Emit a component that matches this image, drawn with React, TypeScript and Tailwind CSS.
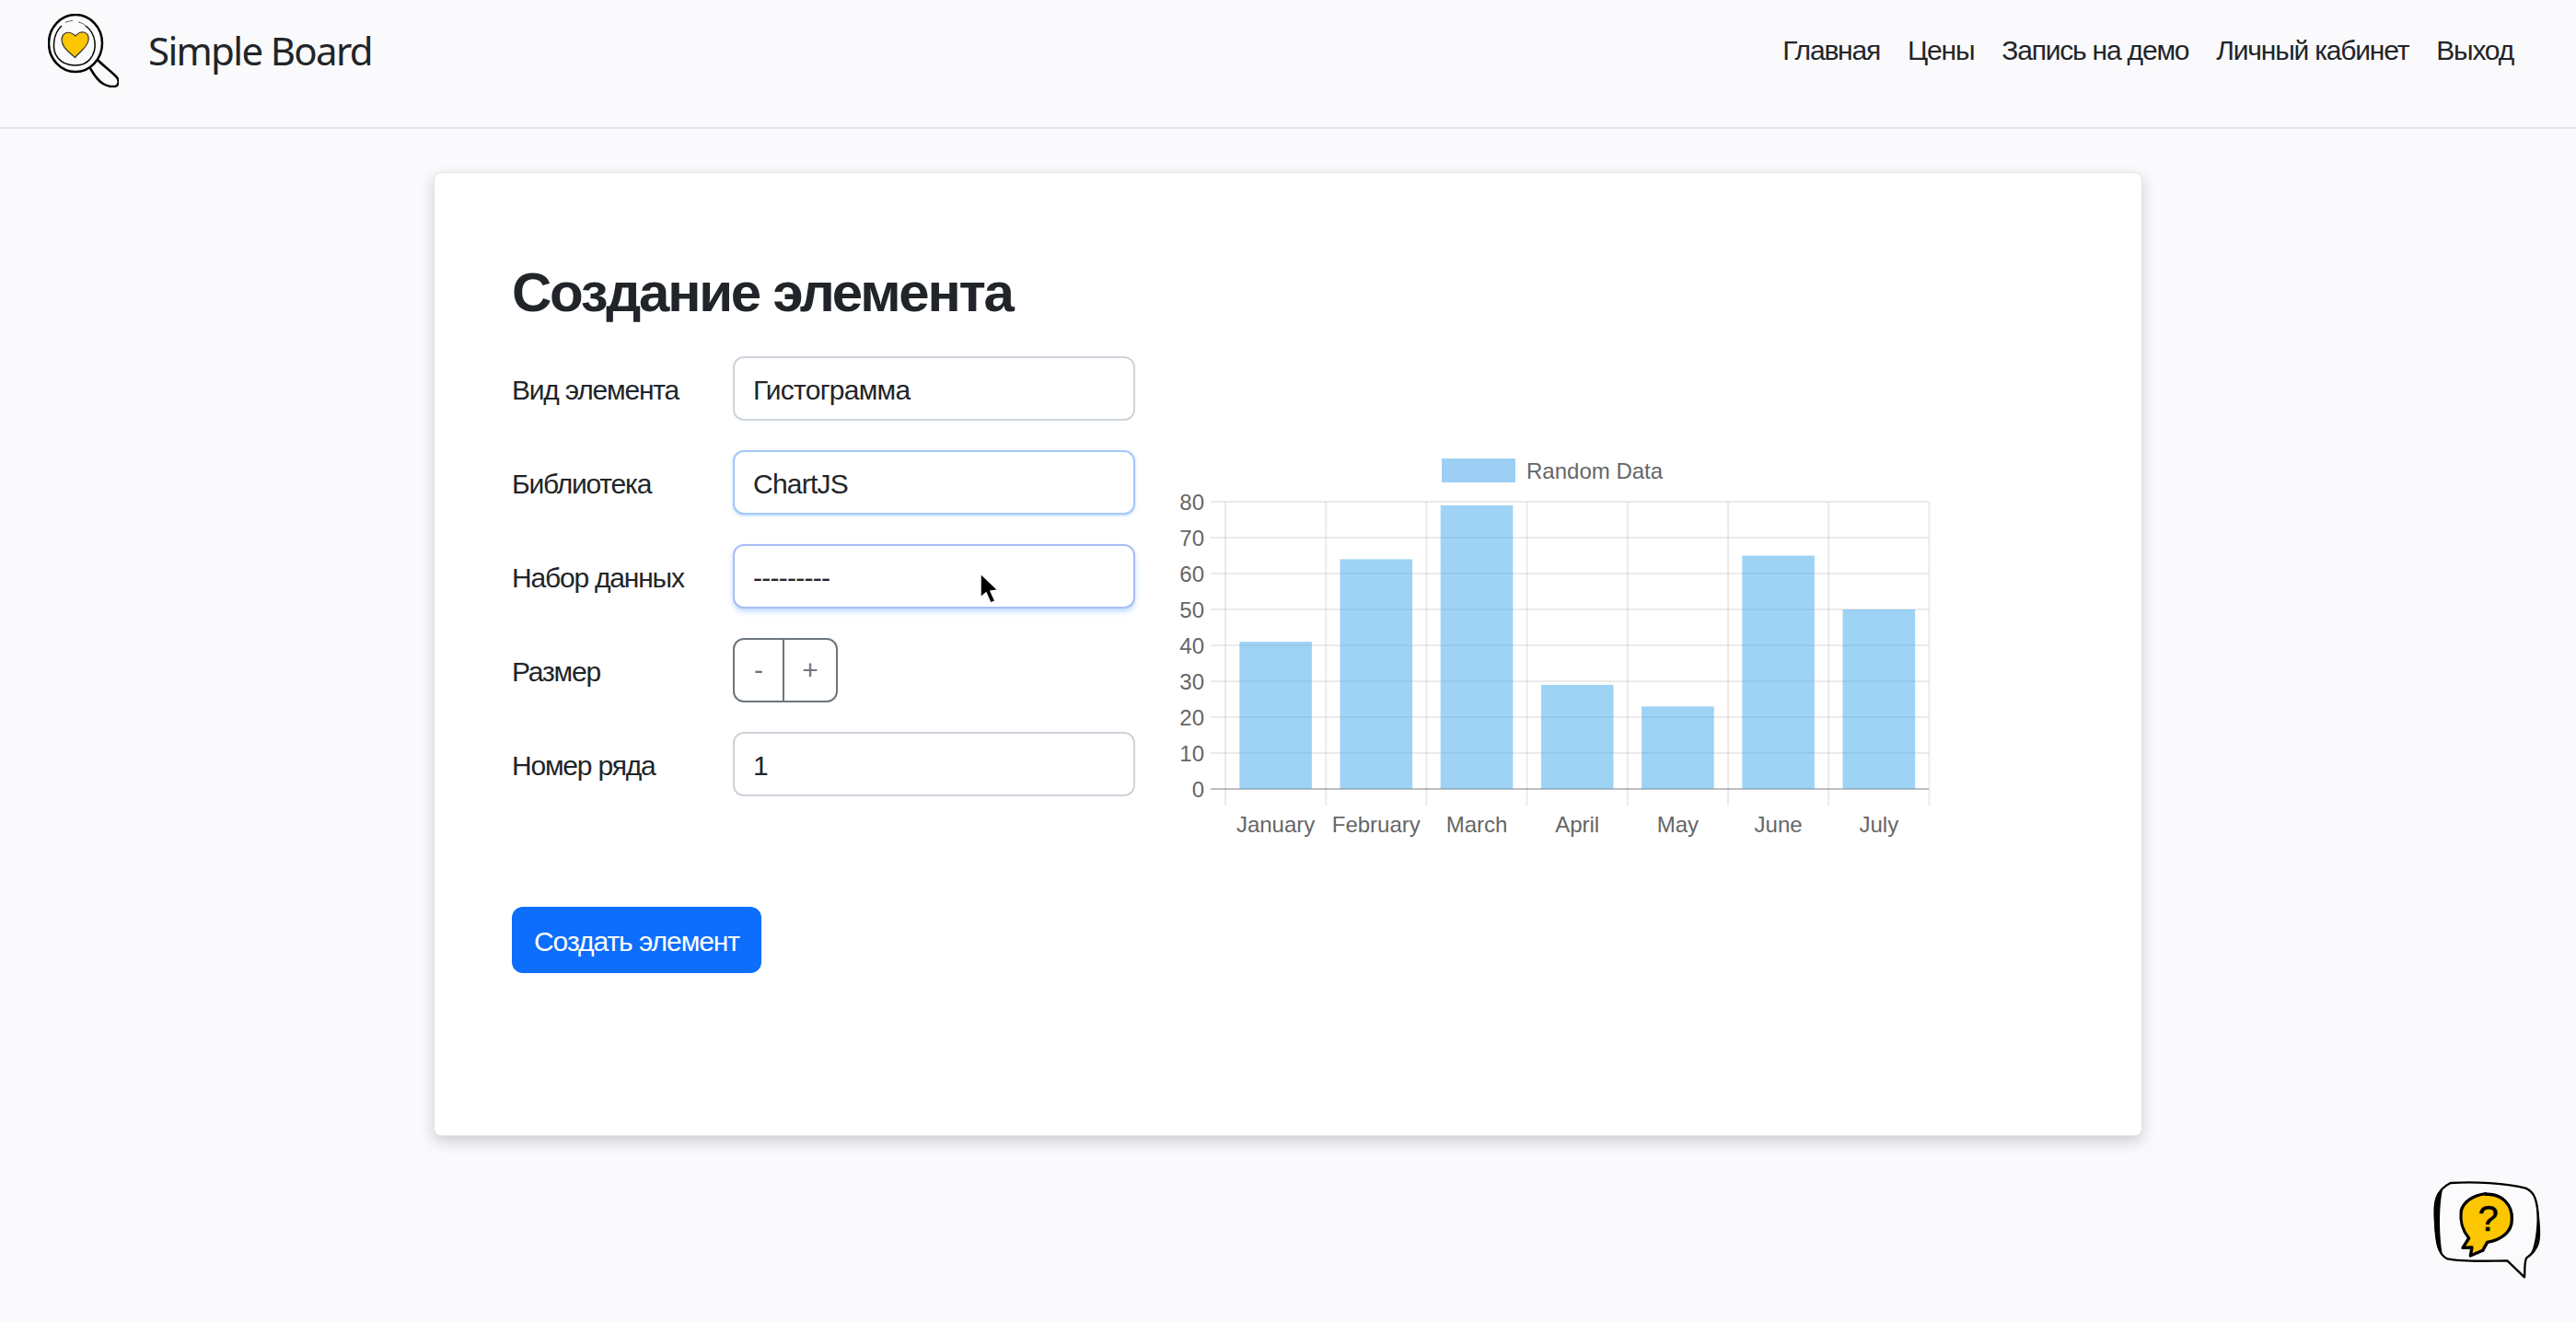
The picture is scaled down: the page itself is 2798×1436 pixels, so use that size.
import React from "react";

const font = { fontFamily: '"Liberation Sans", Arial, sans-serif' };
const months = ["January", "February", "March", "April", "May", "June", "July"];
const values = [41, 64, 79, 29, 23, 65, 50];
const ticks = [0, 10, 20, 30, 40, 50, 60, 70, 80];
const links = ["Главная", "Цены", "Запись на демо", "Личный кабинет", "Выход"];

function Logo() {
  return (
    <svg width="77" height="80" viewBox="0 0 77 80" fill="none">
      <path d="M46.5 60C50 66 55 73 60 76C65 79 72 80 75 78C77.5 75 77 71 74 68C68 62 60 56 55 51" fill="#fbfbfd" stroke="#000" strokeWidth="2.5" strokeLinecap="round" />
      <ellipse cx="30" cy="32" rx="29" ry="31" fill="#fbfbfd" stroke="#000" strokeWidth="2.5" />
      <path d="M15 13C5 22 4 40 11 48C19 58 38 59 46 49C54 39 53 22 41 13" stroke="#000" strokeWidth="1.5" />
      <path d="M19 9.5C22 8 25 7.5 27 7.5M33 9C36 9.5 39 11 41 13" stroke="#555" strokeWidth="1" />
      <path d="M29.5 47.5C24 42 15 37 15 28C15 22 20 19.5 24 20.5C27 21 29 23 30 24C32 21 36 19.5 39 20C43 21 44.5 25 44 29C43 36 34 42 29.5 47.5Z" fill="#fcc600" stroke="#333" strokeWidth="1.2" />
    </svg>
  );
}

function Help() {
  return (
    <svg className="absolute right-0 bottom-0" width="198" height="186" viewBox="0 0 594 558" fill="none">
      <path d="M185 105C260 100 370 105 430 122C460 135 468 160 472 230C478 290 475 320 432 350C425 365 428 395 426 412L370 358C300 360 210 360 175 352C145 340 138 300 135 230C130 170 135 130 185 105Z" fill="#fbfbfd" stroke="#000" strokeWidth="7" strokeLinejoin="round" />
      <path d="M160 122C135 150 130 190 133 240C135 290 142 325 160 342C148 290 146 180 160 122Z" fill="#000" />
      <path d="M465 170C480 220 482 310 440 348C465 310 470 230 465 170Z" fill="#000" />
      <path d="M300 142C350 138 388 175 385 225C385 265 350 290 305 298L290 325L250 342L255 315L225 316L245 285C225 260 215 235 220 195C228 165 260 145 300 140Z" fill="#fcc600" stroke="#000" strokeWidth="10" strokeLinejoin="round" />
      <text x="308" y="262" textAnchor="middle" fontSize="118" fill="#000" stroke="#000" strokeWidth="2" style={font}>?</text>
    </svg>
  );
}

function Chart() {
  const y = (v: number) => 857 - 3.9 * v;
  const x = (i: number) => 1331 + 109.2 * i;
  const grid = "rgba(0,0,0,0.08)";
  return (
    <svg className="ml-6 mt-20" width="860" height="470" viewBox="1257 467 860 470" style={font}>
      <rect x="1566" y="498" width="80" height="26" fill="#9dcff4" />
      <text x="1658" y="520" fontSize="24" fill="#666">Random Data</text>
      {ticks.map((t) => (
        <line key={t} x1="1315" x2="2095" y1={y(t)} y2={y(t)} stroke={t === 0 ? "rgba(0,0,0,0.25)" : grid} strokeWidth="2" />
      ))}
      {[0, 1, 2, 3, 4, 5, 6, 7].map((i) => (
        <line key={i} x1={x(i)} x2={x(i)} y1="545" y2="875" stroke={grid} strokeWidth="2" />
      ))}
      {values.map((v, i) => (
        <rect key={i} x={x(i) + 15.3} y={y(v)} width="78.6" height={3.9 * v} fill="rgba(54,162,235,0.48)" />
      ))}
      {ticks.map((t) => (
        <text key={t} x="1308" y={y(t) + 8.5} textAnchor="end" fontSize="24" fill="#666">{t}</text>
      ))}
      {months.map((m, i) => (
        <text key={m} x={x(i) + 54.6} y="904" textAnchor="middle" fontSize="24" fill="#666">{m}</text>
      ))}
    </svg>
  );
}

function Field({ label, value, focus, cursor, children }: { label: string; value?: string; focus?: string; cursor?: boolean; children?: React.ReactNode }) {
  return (
    <div className="flex items-center">
      <div className="w-60 pt-1 text-3xl tracking-[-0.04em] text-[#212529]">{label}</div>
      {children ?? (
        <div className={`relative flex h-[70px] w-[437px] items-center rounded-xl border-2 bg-white pl-5 pt-1 text-3xl tracking-tight text-[#212529] ${focus ?? "border-[#ced4da]"}`}>
          {value}
          {cursor && (
            <svg className="absolute left-[265px] top-7" width="24" height="36" viewBox="0 0 24 36">
              <path d="M2 2V28L8 23L13 34L18 32L13 21L21 20Z" fill="#000" stroke="#fff" strokeWidth="1.5" />
            </svg>
          )}
        </div>
      )}
    </div>
  );
}

export default function App() {
  return (
    <div className="relative min-h-screen bg-[#fafafc]" style={font}>
      <header className="flex h-35 items-center justify-between border-b-2 border-[#e4e4e7] pb-7 pl-13 pr-17">
        <div className="flex items-center gap-8">
          <Logo />
          <span className="mb-0.5 text-[42px] tracking-[-0.04em] text-[#212529]" style={{ fontFamily: '"Noto Sans", sans-serif' }}>Simple Board</span>
        </div>
        <nav className="flex gap-7.5 text-3xl tracking-[-0.04em] text-[#212529]">
          {links.map((l) => (
            <a key={l}>{l}</a>
          ))}
        </nav>
      </header>
      <main className="mx-auto mt-[47px] w-[1856px] rounded-lg border border-[#e5e5e5] bg-white px-21 pb-44 pt-23 shadow-[0_6px_16px_rgba(0,0,0,0.18)]">
        <h1 className="mb-8 text-6xl font-bold leading-tight tracking-[-0.0375em] text-[#212529]">Создание элемента</h1>
        <div className="flex">
          <div className="flex w-[677px] flex-col gap-8">
            <Field label="Вид элемента" value="Гистограмма" />
            <Field label="Библиотека" value="ChartJS" focus="border-[#a5c8fb] shadow-sm shadow-blue-200" />
            <Field label="Набор данных" value="---------" focus="border-[#a9bdf5] shadow-md shadow-blue-200" cursor />
            <Field label="Размер">
              <div className="flex h-[70px] items-center rounded-xl border-2 border-[#6c757d] text-3xl text-[#6c757d]">
                <div className="flex h-full w-13.5 items-center justify-center border-r-2 border-[#6c757d]">-</div>
                <div className="flex h-full w-14 items-center justify-center">+</div>
              </div>
            </Field>
            <Field label="Номер ряда" value="1" />
          </div>
          <Chart />
        </div>
        <button className="mt-12 block h-18 rounded-xl bg-[#0d6efd] px-6 pt-1 text-3xl tracking-[-0.035em] text-white">Создать элемент</button>
      </main>
      <Help />
    </div>
  );
}
